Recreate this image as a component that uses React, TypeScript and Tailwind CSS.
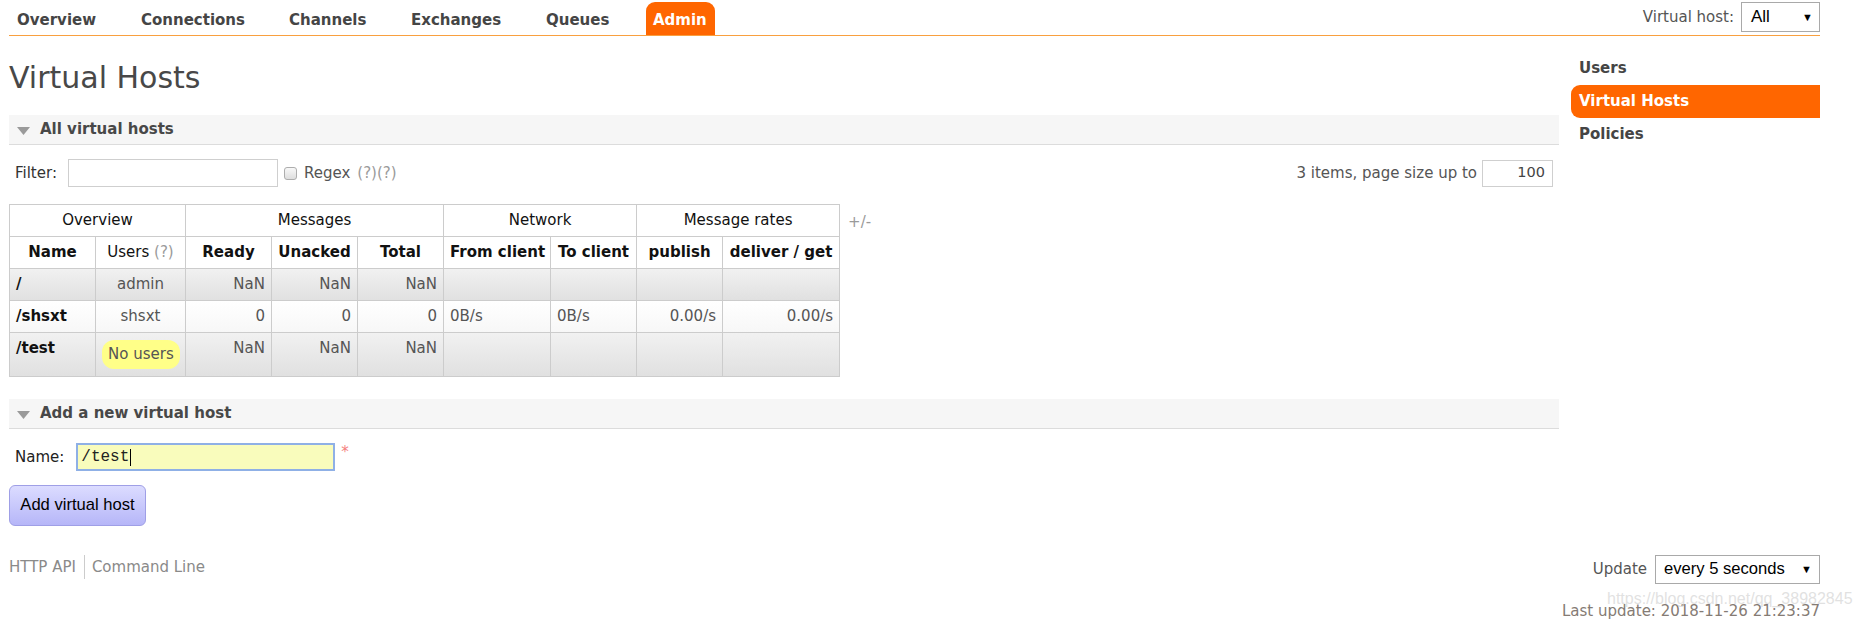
import { Fragment } from "react"

interface VHost {
  name: string
  users: string | null
  ready: string
  unacked: string
  total: string
  from: string
  to: string
  publish: string
  deliver: string
  alt: 1 | 2
}

const hosts: VHost[] = [
  { name: "/", users: "admin", ready: "NaN", unacked: "NaN", total: "NaN", from: "", to: "", publish: "", deliver: "", alt: 1 },
  { name: "/shsxt", users: "shsxt", ready: "0", unacked: "0", total: "0", from: "0B/s", to: "0B/s", publish: "0.00/s", deliver: "0.00/s", alt: 2 },
  { name: "/test", users: null, ready: "NaN", unacked: "NaN", total: "NaN", from: "", to: "", publish: "", deliver: "", alt: 1 },
]

const tabs = [
  { label: "Overview", w: "w-[124px]" },
  { label: "Connections", w: "w-[148px]" },
  { label: "Channels", w: "w-[122px]" },
  { label: "Exchanges", w: "w-[135px]" },
  { label: "Queues", w: "w-[107px]" },
]

function SectionBar({ title }: { title: string }) {
  return (
    <div className="flex items-center h-[30px] bg-[#f6f6f6] border-b border-[#dcdcdc] pl-[8px]">
      <svg width="13" height="8" viewBox="0 0 13 8" className="mt-[2px]">
        <polygon points="0,0 13,0 6.5,8" fill="#9a9a9a" />
      </svg>
      <span className="ml-[10px] font-bold text-[#484848]">{title}</span>
    </div>
  )
}

function App() {
  const td = "border border-[#cccccc] px-[6px] py-[7px] leading-[17px] align-top"
  const th = "border border-[#cccccc] px-[6px] py-[7px] leading-[17px] text-center text-[#111]"

  return (
    <div className="relative w-[1860px] h-[619px] overflow-hidden bg-white text-[15px] text-[#484848] font-['DejaVu_Sans',sans-serif]">
      <header className="ml-[9px] w-[1811px] h-[36px] flex items-end border-b border-[#f9a03f]">
        <ul className="flex items-end pl-[1px]">
          {tabs.map((tab) => (
            <li key={tab.label} className={`${tab.w} h-[33px] pl-[7px] pt-[4px] flex items-center font-bold text-[#454545]`}>
              {tab.label}
            </li>
          ))}
          <li className="w-[69px] h-[33px] pl-[7px] pt-[4px] flex items-center font-bold text-white bg-[#ff6600] rounded-t-[9px]">
            Admin
          </li>
        </ul>
        <div className="ml-auto self-start pt-[2px] flex items-center">
          <span className="text-[#555] mr-[7px] pt-[1px]">Virtual host:</span>
          <div className="w-[79px] h-[30px] border border-[#a9a9a9] flex items-center pl-[9px] pr-[6px] font-['Liberation_Sans',sans-serif] text-[17px] text-black">
            <span>All</span>
            <span className="ml-auto text-[11px]">▼</span>
          </div>
        </div>
      </header>

      <div className="flex">
        <main className="ml-[9px] w-[1550px]">
          <h1 className="mt-[24px] text-[30px] leading-[36px] text-[#484848]">Virtual Hosts</h1>

          <div className="mt-[19px]">
            <SectionBar title="All virtual hosts" />
          </div>

          <div className="mt-[14px] h-[28px] flex items-center">
            <span className="ml-[6px] text-[#333]">Filter:</span>
            <div className="ml-[11px] w-[210px] h-[28px] border border-[#cfcfcf] bg-white" />
            <span className="ml-[6px] w-[13px] h-[13px] rounded-[3px] border border-[#adadad] bg-linear-to-b from-[#f8f8f8] to-[#dedede]" />
            <span className="ml-[7px] text-[#555]">Regex</span>
            <span className="ml-[7px] text-[#9a9a9a]">(?)(?)</span>
            <span className="ml-auto text-[#555]">3 items, page size up to</span>
            <div className="ml-[5px] mr-[6px] w-[71px] h-[27px] border border-[#cfcfcf] flex items-center justify-end pr-[7px] text-[#444] text-[14.5px]">
              100
            </div>
          </div>

          <div className="mt-[17px] flex items-start">
            <table className="table-fixed w-[830px] border-collapse border border-[#cccccc]">
              <colgroup>
                <col className="w-[86px]" />
                <col className="w-[90px]" />
                <col className="w-[86px]" />
                <col className="w-[86px]" />
                <col className="w-[86px]" />
                <col className="w-[107px]" />
                <col className="w-[86px]" />
                <col className="w-[86px]" />
                <col className="w-[117px]" />
              </colgroup>
              <thead>
                <tr>
                  <th colSpan={2} className={`${th} font-normal`}>Overview</th>
                  <th colSpan={3} className={`${th} font-normal`}>Messages</th>
                  <th colSpan={2} className={`${th} font-normal`}>Network</th>
                  <th colSpan={2} className={`${th} font-normal`}>Message rates</th>
                </tr>
                <tr>
                  <th className={th}>Name</th>
                  <th className={`${th} font-normal`}>
                    Users <span className="text-[#9a9a9a]">(?)</span>
                  </th>
                  <th className={th}>Ready</th>
                  <th className={th}>Unacked</th>
                  <th className={th}>Total</th>
                  <th className={`${th} whitespace-nowrap px-[2px]`}>From client</th>
                  <th className={`${th} whitespace-nowrap px-[2px]`}>To client</th>
                  <th className={th}>publish</th>
                  <th className={`${th} whitespace-nowrap px-[2px]`}>deliver / get</th>
                </tr>
              </thead>
              <tbody>
                {hosts.map((host) => (
                  <tr
                    key={host.name}
                    className={
                      host.alt === 1
                        ? "bg-linear-to-b from-[#f1f1f1] to-[#e0e0e0]"
                        : "bg-linear-to-b from-white to-[#f7f7f7]"
                    }
                  >
                    <td className={`${td} font-bold text-[#111]`}>{host.name}</td>
                    <td className={`${td} text-center text-[#555]`}>
                      {host.users ?? (
                        <span className="inline-block align-top px-[6px] py-[6px] rounded-[12px] bg-[#ffff88] text-[#555] whitespace-nowrap leading-[17px]">
                          No users
                        </span>
                      )}
                    </td>
                    <td className={`${td} text-right text-[#555]`}>{host.ready}</td>
                    <td className={`${td} text-right text-[#555]`}>{host.unacked}</td>
                    <td className={`${td} text-right text-[#555]`}>{host.total}</td>
                    <td className={`${td} text-[#555]`}>{host.from}</td>
                    <td className={`${td} text-[#555]`}>{host.to}</td>
                    <td className={`${td} text-right text-[#555]`}>{host.publish}</td>
                    <td className={`${td} text-right text-[#555]`}>{host.deliver}</td>
                  </tr>
                ))}
              </tbody>
            </table>
            <span className="ml-[8px] mt-[7px] text-[#9a9a9a]">+/-</span>
          </div>

          <div className="mt-[22px]">
            <SectionBar title="Add a new virtual host" />
          </div>

          <div className="mt-[14px] flex items-center h-[28px]">
            <span className="ml-[6px] text-[#222]">Name:</span>
            <div className="ml-[12px] w-[259px] h-[28px] border-2 border-[#8fb0e6] bg-[#f9fcbc] flex items-center pl-[3px] font-['Liberation_Mono',monospace] text-[16px] text-[#222]">
              /test
              <span className="ml-[1px] w-[1px] h-[17px] bg-black" />
            </div>
            <span className="ml-[6px] -mt-[9px] text-[#f47e7e]">*</span>
          </div>

          <button className="mt-[14px] w-[137px] h-[41px] rounded-[6px] border border-[#9f9fe6] bg-linear-to-b from-[#dcdcff] to-[#b6b6f8] font-['Liberation_Sans',sans-serif] text-[16.6px] text-black">
            Add virtual host
          </button>
        </main>

        <aside className="ml-[12px] w-[249px] mt-[16px]">
          {["Users", "Virtual Hosts", "Policies"].map((item) => (
            <Fragment key={item}>
              <div
                className={`h-[33px] flex items-center pl-[8px] font-bold ${
                  item === "Virtual Hosts" ? "bg-[#ff6600] text-white rounded-l-[9px]" : "text-[#454545]"
                }`}
              >
                {item}
              </div>
            </Fragment>
          ))}
        </aside>
      </div>

      <footer className="ml-[9px] w-[1811px] mt-[29px] flex items-start justify-between">
        <div className="flex items-center h-[24px] text-[#8a8a8a]">
          <span className="pr-[8px] h-[24px] flex items-center border-r border-[#cccccc]">HTTP API</span>
          <span className="pl-[7px]">Command Line</span>
        </div>
        <div className="flex flex-col items-end">
          <div className="flex items-center">
            <span className="text-[#555] mr-[8px]">Update</span>
            <div className="w-[165px] h-[29px] border border-[#a9a9a9] flex items-center pl-[8px] pr-[7px] font-['Liberation_Sans',sans-serif] text-[16.6px] text-black">
              <span>every 5 seconds</span>
              <span className="ml-auto text-[11px]">▼</span>
            </div>
          </div>
          <div className="mt-[19px] leading-[17px] text-[#857b74] whitespace-nowrap">Last update: 2018-11-26 21:23:37</div>
        </div>
      </footer>

      <span className="absolute left-[1607px] top-[589px] font-['Liberation_Sans',sans-serif] text-[16px] leading-[20px] text-[#d4d4d4]/70 pointer-events-none">
        https://blog.csdn.net/qq_38982845
      </span>
    </div>
  )
}

export default App
